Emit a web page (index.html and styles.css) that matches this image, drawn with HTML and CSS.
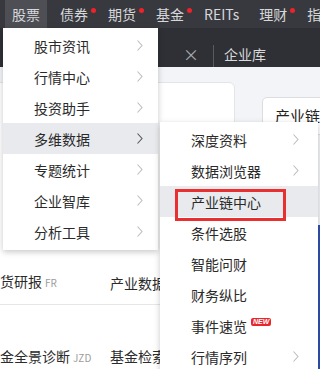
FILE: index.html
```html
<!DOCTYPE html>
<html lang="zh">
<head>
<meta charset="utf-8">
<link rel="stylesheet" href="styles.css">
</head>
<body>
<div class="page">
  <nav class="topnav">
    <span class="nav-item active">股票</span>
    <span class="nav-item dot">债券</span>
    <span class="nav-item dot">期货</span>
    <span class="nav-item dot">基金</span>
    <span class="nav-item">REITs</span>
    <span class="nav-item dot">理财</span>
    <span class="nav-item">指数</span>
  </nav>
  <div class="tabbar">
    <span class="tab-close">×</span>
    <span class="tab-divider"></span>
    <span class="tab-title">企业库</span>
  </div>
  <div class="content">
    <div class="card-main">
      <div class="card-spacer"></div>
      <div class="grid-row first">
        <span class="cell">期货研报<small>FR</small></span>
        <span class="cell">产业数据库</span>
      </div>
      <div class="grid-row second">
        <span class="cell">基金全景诊断<small>JZD</small></span>
        <span class="cell">基金检索</span>
      </div>
    </div>
    <div class="card-side">产业链中心</div>
  </div>

  <div class="menu">
    <div class="menu-row"><span>股市资讯</span><svg class="chev" viewBox="0 0 6 11"><polyline points="0.5,0.5 5,5.5 0.5,10.5"/></svg></div>
    <div class="menu-row"><span>行情中心</span><svg class="chev" viewBox="0 0 6 11"><polyline points="0.5,0.5 5,5.5 0.5,10.5"/></svg></div>
    <div class="menu-row"><span>投资助手</span><svg class="chev" viewBox="0 0 6 11"><polyline points="0.5,0.5 5,5.5 0.5,10.5"/></svg></div>
    <div class="menu-row hover"><span>多维数据</span><svg class="chev" viewBox="0 0 6 11"><polyline points="0.5,0.5 5,5.5 0.5,10.5"/></svg></div>
    <div class="menu-row"><span>专题统计</span><svg class="chev" viewBox="0 0 6 11"><polyline points="0.5,0.5 5,5.5 0.5,10.5"/></svg></div>
    <div class="menu-row"><span>企业智库</span><svg class="chev" viewBox="0 0 6 11"><polyline points="0.5,0.5 5,5.5 0.5,10.5"/></svg></div>
    <div class="menu-row"><span>分析工具</span><svg class="chev" viewBox="0 0 6 11"><polyline points="0.5,0.5 5,5.5 0.5,10.5"/></svg></div>
  </div>

  <div class="submenu">
    <div class="menu-row"><span>深度资料</span><svg class="chev" viewBox="0 0 6 11"><polyline points="0.5,0.5 5,5.5 0.5,10.5"/></svg></div>
    <div class="menu-row"><span>数据浏览器</span><svg class="chev" viewBox="0 0 6 11"><polyline points="0.5,0.5 5,5.5 0.5,10.5"/></svg></div>
    <div class="menu-row hover"><span>产业链中心</span></div>
    <div class="menu-row"><span>条件选股</span></div>
    <div class="menu-row"><span>智能问财</span></div>
    <div class="menu-row"><span>财务纵比</span></div>
    <div class="menu-row"><span>事件速览</span><span class="badge">NEW</span></div>
    <div class="menu-row"><span>行情序列</span><svg class="chev" viewBox="0 0 6 11"><polyline points="0.5,0.5 5,5.5 0.5,10.5"/></svg></div>
    <div class="highlight-box"></div>
  </div>
  <div class="edge-line"></div>
</div>
</body>
</html>
```

FILE: styles.css
```css
* { box-sizing: border-box; }
html, body { margin: 0; padding: 0; }
body {
  width: 320px;
  height: 369px;
  overflow: hidden;
  font-family: "Noto Sans CJK SC", "Noto Sans", sans-serif;
  background: #ffffff;
}
.page {
  position: relative;
  width: 320px;
  height: 369px;
  overflow: hidden;
  background: #f3f4f7;
}
.topnav {
  display: flex;
  gap: 6px;
  height: 28px;
  padding-left: 5px;
  background: #38393e;
  white-space: nowrap;
}
.nav-item {
  position: relative;
  padding: 0 7px;
  font-size: 14px;
  line-height: 28px;
  color: #d6d7da;
}
.nav-item.active { background: #4d4f55; }
.nav-item.dot::after {
  content: "";
  position: absolute;
  top: 8px;
  right: -1px;
  width: 5px;
  height: 5px;
  border-radius: 50%;
  background: #f0212a;
}
.tabbar {
  display: flex;
  align-items: center;
  height: 39px;
  padding: 14px 0 0 183px;
  background: #2f3035;
}
.tab-close {
  font-size: 16px;
  line-height: 25px;
  color: #a9aaae;
}
.tab-divider {
  width: 1px;
  height: 22px;
  margin: 0 10px 0 14px;
  background: #5a5b60;
  align-self: flex-end;
}
.tab-title {
  font-size: 14px;
  line-height: 25px;
  color: #d9dadd;
}
.content {
  display: flex;
  align-items: flex-start;
  padding-top: 15px;
}
.card-main {
  flex: none;
  width: 255px;
  height: 300px;
  margin-left: -20px;
  padding-left: 5px;
  background: #ffffff;
  border: 1px solid #e4e5e9;
  border-radius: 6px;
}
.card-spacer { height: 170px; }
.grid-row {
  display: grid;
  grid-template-columns: 124px 1fr;
  font-size: 14px;
  line-height: 20px;
  color: #2b2b2b;
  white-space: nowrap;
}
.grid-row.first {
  height: 52px;
  align-items: end;
  padding-bottom: 11px;
  border-bottom: 1px solid #e6e6e6;
  margin-left: -5px;
  padding-left: 5px;
}
.grid-row.second { padding-top: 41px; }
.cell small {
  font-size: 10px;
  color: #9c9c9c;
  margin-left: 3px;
}
.card-side {
  flex: none;
  width: 120px;
  margin: 15px 0 0 27px;
  padding: 7px 12px;
  font-size: 15px;
  line-height: 22px;
  color: #222;
  background: #ffffff;
  border: 1px solid #dcdde1;
  border-radius: 5px;
  white-space: nowrap;
}
.menu, .submenu {
  position: absolute;
  background: #ffffff;
  box-shadow: 0 2px 6px rgba(0, 0, 0, 0.22);
}
.menu {
  left: 3px;
  top: 28px;
  width: 155px;
  padding: 2px 0 3px;
}
.submenu {
  left: 160px;
  top: 122px;
  width: 158px;
  height: 260px;
  padding-top: 2px;
}
.menu-row {
  display: flex;
  align-items: center;
  height: 31px;
  padding-left: 31px;
  font-size: 14px;
  color: #2a2a2a;
  white-space: nowrap;
}
.menu-row.hover { background: #e9eaee; }
.chev {
  width: 6px;
  height: 11px;
  margin-left: auto;
  margin-right: 15px;
  fill: none;
  stroke: #bdbdbd;
  stroke-width: 1.1;
}
.submenu .chev { margin-right: 19px; }
.menu-row.hover .chev { stroke: #555; }
.badge {
  align-self: flex-start;
  margin: 8px 0 0 4px;
  padding: 0 2px;
  font-size: 7px;
  line-height: 8px;
  font-weight: 700;
  font-style: italic;
  color: #fff;
  background: #e8262d;
  border-radius: 2px;
  font-family: "Liberation Sans", sans-serif;
}
.highlight-box {
  position: absolute;
  left: 15px;
  top: 67px;
  width: 111px;
  height: 32px;
  border: 3px solid #e7302f;
}
.edge-line {
  position: absolute;
  left: 318px;
  top: 225px;
  width: 2px;
  height: 150px;
  background: #2c4aa3;
}
```
